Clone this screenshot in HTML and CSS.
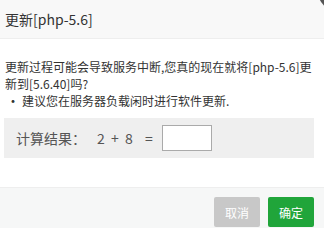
FILE: index.html
```html
<!DOCTYPE html>
<html>
<head>
<meta charset="utf-8">
<link rel="stylesheet" href="styles.css">
</head>
<body>
<div class="dialog">
  <div class="head">更新[php-5.6]</div>
  <span class="close"></span>
  <div class="content">
    <p class="msg">更新过程可能会导致服务中断,您真的现在就将[php-5.6]更新到[5.6.40]吗?</p>
    <ul class="tips"><li>建议您在服务器负载闲时进行软件更新.</li></ul>
    <div class="calc">
      <span class="label">计算结果：</span>
      <span class="expr"><span class="n">2</span><span class="op">+</span><span class="n">8</span><span class="eq">=</span></span>
      <input class="answer" type="text">
    </div>
  </div>
  <div class="foot">
    <button class="btn cancel">取消</button>
    <button class="btn ok">确定</button>
  </div>
</div>
</body>
</html>
```
FILE: styles.css
```css
html, body { margin: 0; padding: 0; background: #fff; overflow: hidden; }
body { font-family: "Noto Sans CJK SC", "Noto Sans", sans-serif; color: #333; }
.dialog { position: relative; width: 324px; height: 228px; overflow: hidden; }
.head {
  height: 38px; line-height: 38px; padding-left: 5px;
  background: #f8f8f8; border-bottom: 1px solid #eee;
  font-size: 14px; color: #333;
}
.close {
  position: absolute; left: 318px; top: -26px;
  width: 36px; height: 36px; border-radius: 50%; background: #555;
}
.content { padding: 19px 10px 0 5px; }
.msg { margin: 0; font-size: 12px; line-height: 17px; color: #333; }
.tips { margin: 0; padding: 0; list-style: none; font-size: 12px; line-height: 17px; }
.tips li { display: flex; }
.tips li::before { content: "•"; width: 17px; padding-left: 1px; box-sizing: border-box; font-size: 14px; }
.calc {
  margin: 9px 0 0 -1px; width: 310px; height: 40px; background: #efefef;
  display: flex; align-items: center; font-size: 14px; color: #555;
}
.label { margin-left: 12px; width: 81px; }
.expr { width: 65px; display: flex; }
.n { width: 8px; text-align: center; }
.op { width: 8px; text-align: center; margin: 0 6px; }
.eq { width: 8px; text-align: center; margin-left: 12px; }
.answer {
  width: 50px; height: 26px; box-sizing: border-box; border: 1px solid #aaa;
  background: #fff; padding: 0; margin: 0; outline: none;
}
.foot {
  position: absolute; left: 0; right: 0; top: 187px; bottom: 0;
  background: #f6f7f7; border-top: 1px solid #eee;
  display: flex; justify-content: flex-end; align-items: flex-start;
  padding: 9px 10px 0 0; gap: 8px;
}
.btn {
  width: 46px; height: 30px; border: none; border-radius: 2px; color: #fff;
  font-family: "Noto Sans CJK SC", sans-serif; font-size: 12px; padding: 0;
}
.cancel { background: #c8c8c8; }
.ok { background: #20a53a; }
```
